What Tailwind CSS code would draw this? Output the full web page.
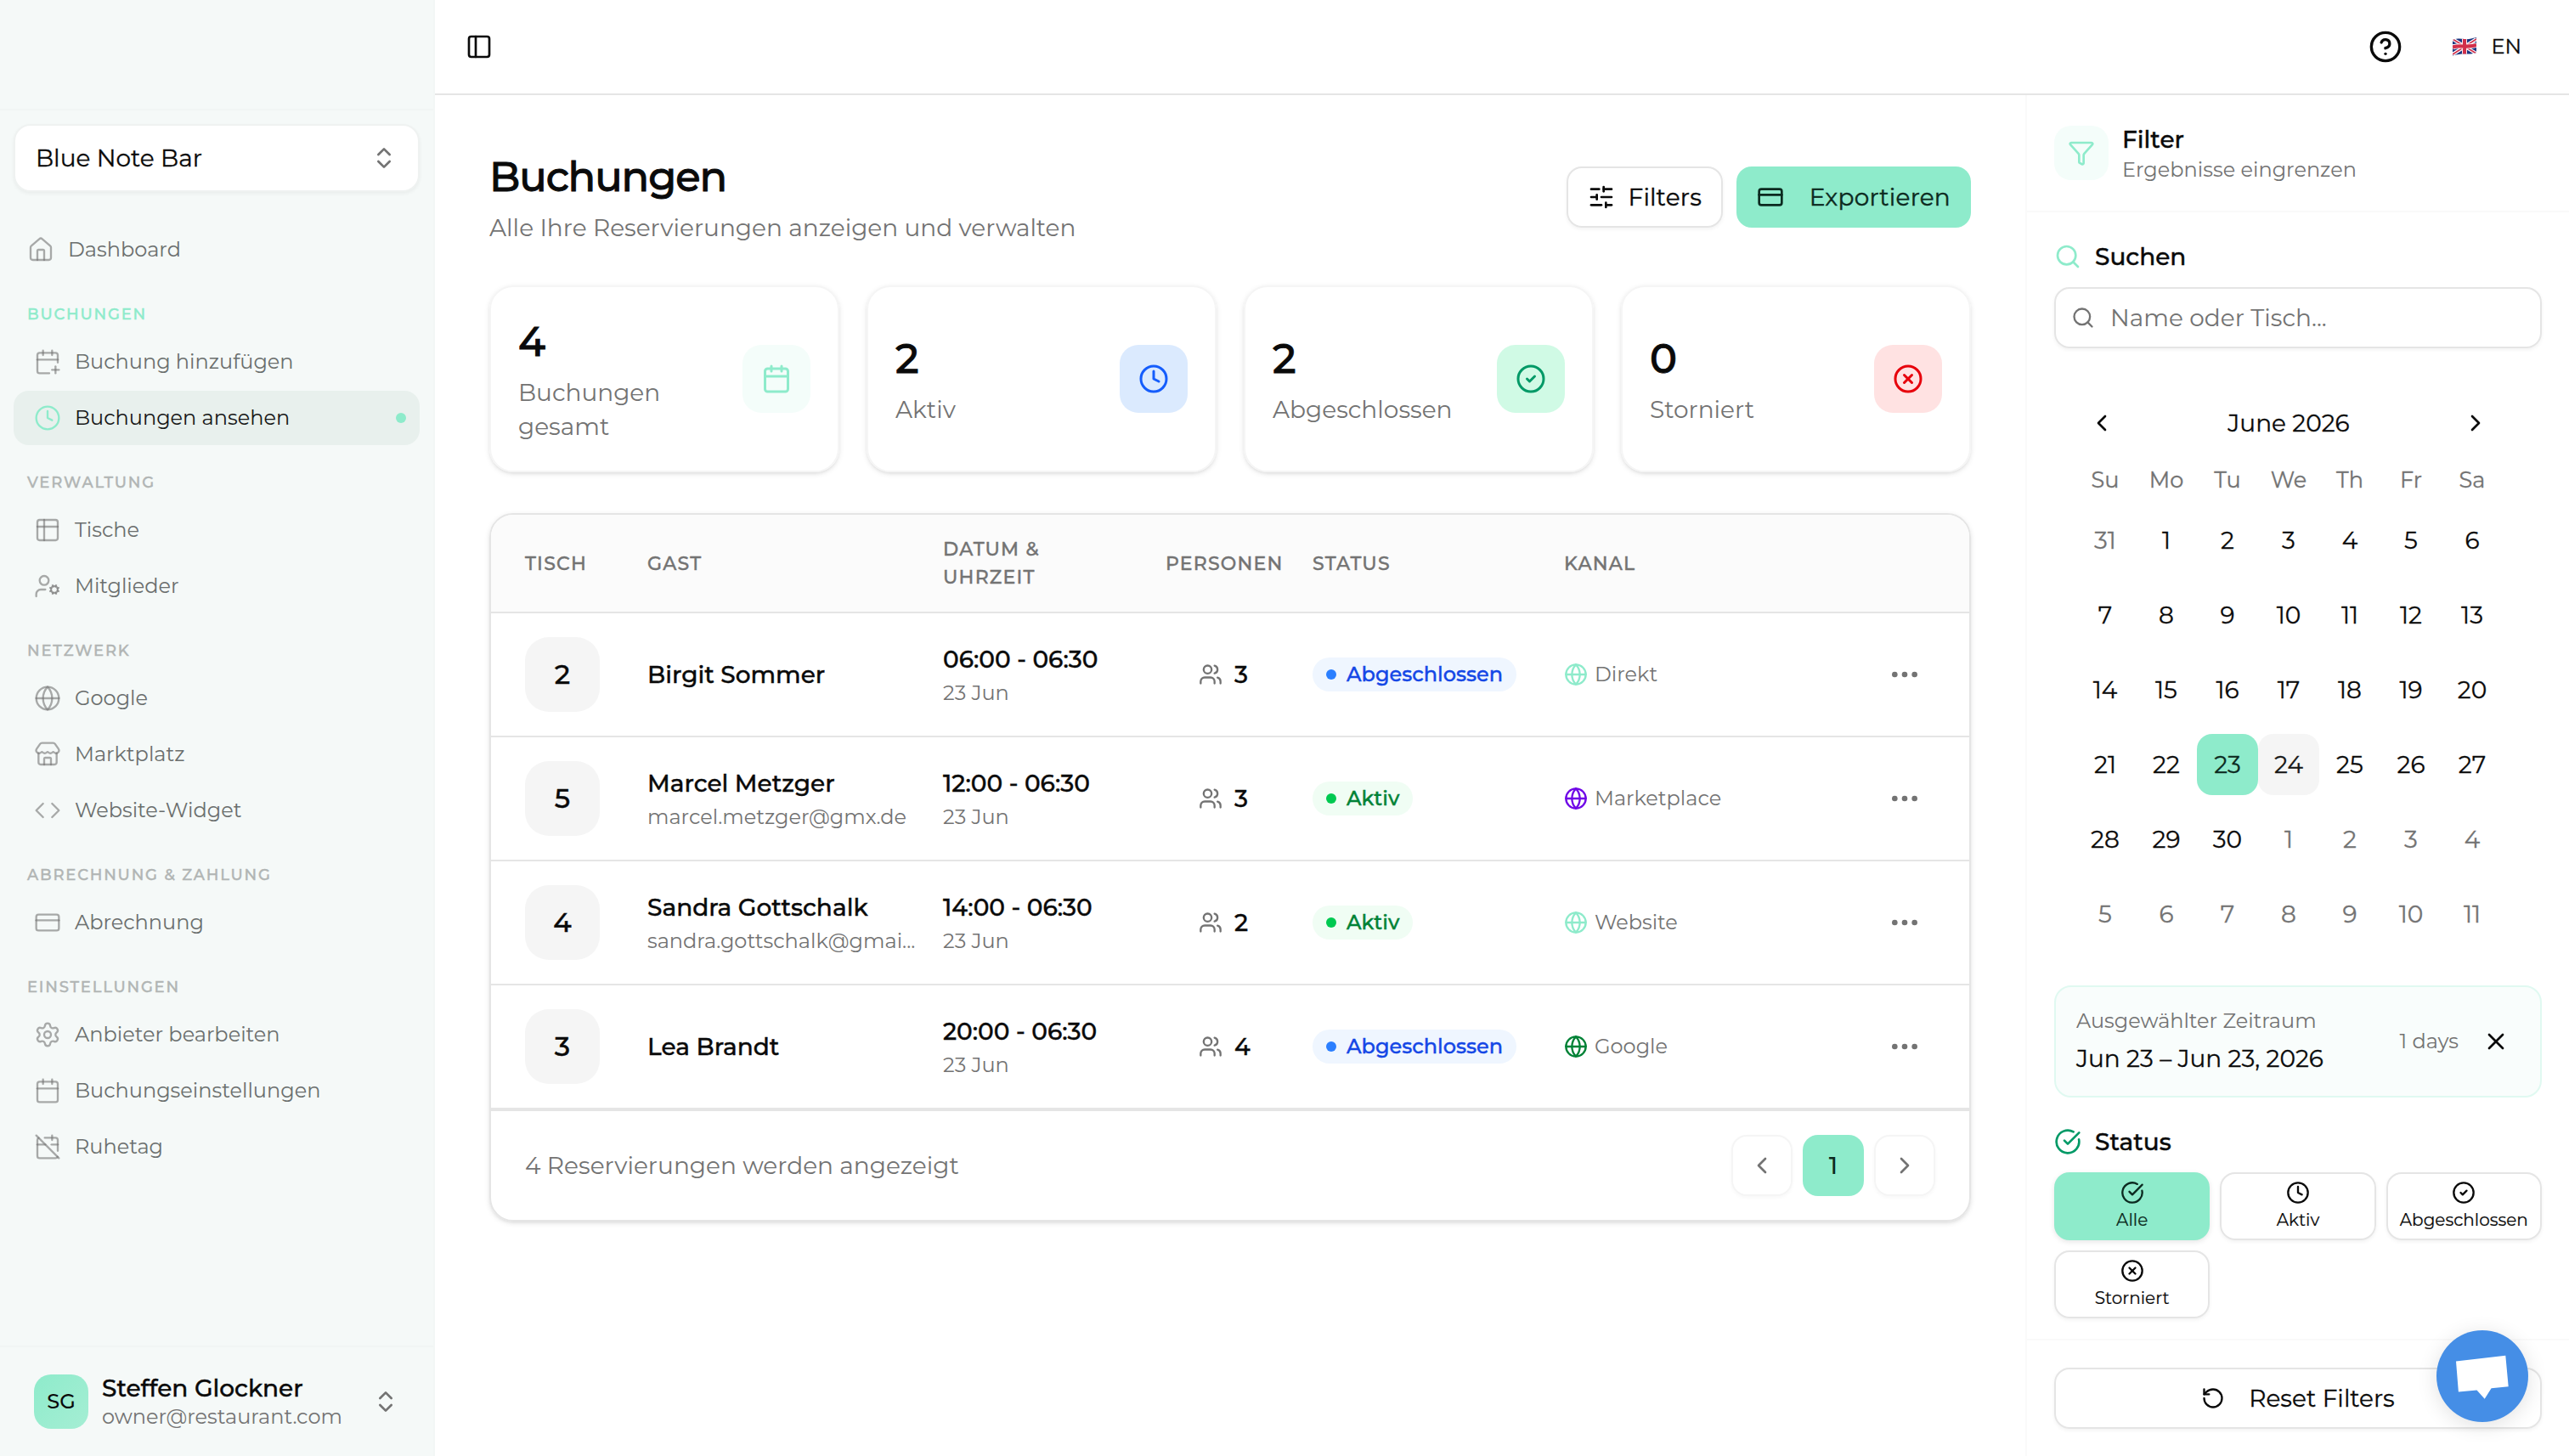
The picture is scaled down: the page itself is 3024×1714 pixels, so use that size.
<!DOCTYPE html>
<html lang="de">

<head>
	<meta charset="utf-8" />
	<meta name="viewport" content="width=device-width, initial-scale=1.0" />
	<script src="https://cdn.jsdelivr.net/npm/@tailwindcss/browser@4"></script>
	<title>Buchungen</title>
</head>

<body class="bg-white font-[Montserrat,Inter,sans-serif] text-[28px] leading-10 text-neutral-950">
	<!-- icons -->
	<svg class="hidden">
		<symbol id="panel" viewBox="0 0 24 24"><rect width="18" height="18" x="3" y="3" rx="2" /><path d="M9 3v18" /></symbol>
		<symbol id="updown" viewBox="0 0 24 24"><path d="m7 15 5 5 5-5" /><path d="m7 9 5-5 5 5" /></symbol>
		<symbol id="house" viewBox="0 0 24 24"><path d="M15 21v-8a1 1 0 0 0-1-1h-4a1 1 0 0 0-1 1v8" /><path d="M3 10a2 2 0 0 1 .709-1.528l7-5.999a2 2 0 0 1 2.582 0l7 5.999A2 2 0 0 1 21 10v9a2 2 0 0 1-2 2H5a2 2 0 0 1-2-2z" /></symbol>
		<symbol id="calendar-plus" viewBox="0 0 24 24"><path d="M16 19h6" /><path d="M16 2v4" /><path d="M19 16v6" /><path d="M21 12.598V6a2 2 0 0 0-2-2H5a2 2 0 0 0-2 2v14a2 2 0 0 0 2 2h8.5" /><path d="M3 10h18" /><path d="M8 2v4" /></symbol>
		<symbol id="clock" viewBox="0 0 24 24"><circle cx="12" cy="12" r="10" /><path d="M12 6v6l4 2" /></symbol>
		<symbol id="table" viewBox="0 0 24 24"><rect width="18" height="18" x="3" y="3" rx="2" /><path d="M3 9h18" /><path d="M9 3v18" /></symbol>
		<symbol id="user-cog" viewBox="0 0 24 24"><path d="M10 15H6a4 4 0 0 0-4 4v2" /><path d="m14.305 16.53.923-.382" /><path d="m15.228 13.852-.923-.383" /><path d="m16.852 12.228-.383-.923" /><path d="m16.852 17.772-.383.924" /><path d="m19.148 12.228.383-.923" /><path d="m19.53 18.696-.382-.924" /><path d="m20.772 13.852.924-.383" /><path d="m20.772 16.148.924.383" /><circle cx="18" cy="15" r="3" /><circle cx="9" cy="7" r="4" /></symbol>
		<symbol id="globe" viewBox="0 0 24 24"><circle cx="12" cy="12" r="10" /><path d="M12 2a14.5 14.5 0 0 0 0 20 14.5 14.5 0 0 0 0-20" /><path d="M2 12h20" /></symbol>
		<symbol id="store" viewBox="0 0 24 24"><path d="M15 21v-5a1 1 0 0 0-1-1h-4a1 1 0 0 0-1 1v5" /><path d="M17.774 10.31a1.12 1.12 0 0 0-1.549 0 2.5 2.5 0 0 1-3.451 0 1.12 1.12 0 0 0-1.548 0 2.5 2.5 0 0 1-3.452 0 1.12 1.12 0 0 0-1.549 0 2.5 2.5 0 0 1-3.77-3.248l2.889-4.184A2 2 0 0 1 7 2h10a2 2 0 0 1 1.653.873l2.895 4.192a2.5 2.5 0 0 1-3.774 3.244" /><path d="M4 10.95V19a2 2 0 0 0 2 2h12a2 2 0 0 0 2-2v-8.05" /></symbol>
		<symbol id="code" viewBox="0 0 24 24"><path d="m16 18 6-6-6-6" /><path d="m8 6-6 6 6 6" /></symbol>
		<symbol id="card" viewBox="0 0 24 24"><rect width="20" height="14" x="2" y="5" rx="2" /><path d="M2 10h20" /></symbol>
		<symbol id="settings" viewBox="0 0 24 24"><path d="M9.671 4.136a2.34 2.34 0 0 1 4.659 0 2.34 2.34 0 0 0 3.319 1.915 2.34 2.34 0 0 1 2.33 4.033 2.34 2.34 0 0 0 0 3.831 2.34 2.34 0 0 1-2.33 4.033 2.34 2.34 0 0 0-3.319 1.915 2.34 2.34 0 0 1-4.659 0 2.34 2.34 0 0 0-3.32-1.915 2.34 2.34 0 0 1-2.33-4.033 2.34 2.34 0 0 0 0-3.831A2.34 2.34 0 0 1 6.35 6.051a2.34 2.34 0 0 0 3.319-1.915" /><circle cx="12" cy="12" r="3" /></symbol>
		<symbol id="calendar" viewBox="0 0 24 24"><path d="M8 2v4" /><path d="M16 2v4" /><rect width="18" height="18" x="3" y="4" rx="2" /><path d="M3 10h18" /></symbol>
		<symbol id="calendar-off" viewBox="0 0 24 24"><path d="M4.2 4.2A2 2 0 0 0 3 6v14a2 2 0 0 0 2 2h14a2 2 0 0 0 1.82-1.18" /><path d="M21 15.5V6a2 2 0 0 0-2-2H9.5" /><path d="M16 2v4" /><path d="M3 10h7" /><path d="M21 10h-5.5" /><path d="m2 2 20 20" /></symbol>
		<symbol id="help" viewBox="0 0 24 24"><circle cx="12" cy="12" r="10" /><path d="M9.09 9a3 3 0 0 1 5.83 1c0 2-3 3-3 3" /><path d="M12 17h.01" /></symbol>
		<symbol id="sliders" viewBox="0 0 24 24"><path d="M10 5H3" /><path d="M12 19H3" /><path d="M14 3v4" /><path d="M16 17v4" /><path d="M21 12h-9" /><path d="M21 19h-5" /><path d="M21 5h-7" /><path d="M8 10v4" /><path d="M8 12H3" /></symbol>
		<symbol id="check" viewBox="0 0 24 24"><circle cx="12" cy="12" r="10" /><path d="m9 12 2 2 4-4" /></symbol>
		<symbol id="check-big" viewBox="0 0 24 24"><path d="M21.801 10A10 10 0 1 1 17 3.335" /><path d="m9 11 3 3L22 4" /></symbol>
		<symbol id="circle-x" viewBox="0 0 24 24"><circle cx="12" cy="12" r="10" /><path d="m15 9-6 6" /><path d="m9 9 6 6" /></symbol>
		<symbol id="users" viewBox="0 0 24 24"><path d="M16 21v-2a4 4 0 0 0-4-4H6a4 4 0 0 0-4 4v2" /><path d="M16 3.128a4 4 0 0 1 0 7.744" /><path d="M22 21v-2a4 4 0 0 0-3-3.87" /><circle cx="9" cy="7" r="4" /></symbol>
		<symbol id="dots" viewBox="0 0 24 24"><circle cx="12" cy="12" r="1" /><circle cx="19" cy="12" r="1" /><circle cx="5" cy="12" r="1" /></symbol>
		<symbol id="left" viewBox="0 0 24 24"><path d="m15 18-6-6 6-6" /></symbol>
		<symbol id="right" viewBox="0 0 24 24"><path d="m9 18 6-6-6-6" /></symbol>
		<symbol id="funnel" viewBox="0 0 24 24"><path d="M10 20a1 1 0 0 0 .553.895l2 1A1 1 0 0 0 14 21v-7a2 2 0 0 1 .517-1.341L21.74 4.67A1 1 0 0 0 21 3H3a1 1 0 0 0-.742 1.67l7.225 7.989A2 2 0 0 1 10 14z" /></symbol>
		<symbol id="search" viewBox="0 0 24 24"><path d="m21 21-4.34-4.34" /><circle cx="11" cy="11" r="8" /></symbol>
		<symbol id="x" viewBox="0 0 24 24"><path d="M18 6 6 18" /><path d="m6 6 12 12" /></symbol>
		<symbol id="reset" viewBox="0 0 24 24"><path d="M3 12a9 9 0 1 0 9-9 9.75 9.75 0 0 0-6.74 2.74L3 8" /><path d="M3 3v5h5" /></symbol>
	</svg>

	<div class="flex h-[1714px] w-[3024px] overflow-hidden fill-none stroke-current stroke-2 [stroke-linecap:round] [stroke-linejoin:round]">
		<!-- sidebar -->
		<aside class="flex w-[512px] shrink-0 flex-col border-r-2 border-[#f3f7f6] bg-[#f5f9f8]">
			<div class="h-[130px] shrink-0 border-b-2 border-[#f1f5f4]"></div>
			<div class="p-4">
				<button class="flex h-20 w-full items-center justify-between rounded-[20px] border-2 border-[#eff2f1] bg-white px-6 shadow-[0_2px_4px_rgb(0_0_0/0.05)] [-webkit-text-stroke:0.3px]">
					<span>Blue Note Bar</span>
					<svg class="size-8 text-neutral-500"><use href="#updown" /></svg>
				</button>
			</div>
			<nav class="grow px-4 pt-5 text-[24px] text-[#6b6f6e]">
				<a class="flex h-16 items-center gap-4 px-4"><svg class="size-8 stroke-[1.75] text-neutral-500/60"><use href="#house" /></svg>Dashboard</a>
				<div id="nav"></div>
			</nav>
			<div class="flex h-[130px] shrink-0 items-center border-t-2 border-[#f1f5f4] pr-10 pl-10">
				<div class="flex size-16 items-center justify-center rounded-[20px] bg-linear-to-br from-[#8eebcb] to-[#a5eed4] text-[24px] font-medium">SG</div>
				<div class="ml-4 grow">
					<div class="text-[28px] leading-[35px] font-medium [-webkit-text-stroke:0.4px]">Steffen Glockner</div>
					<div class="text-[24px] leading-8 text-neutral-500">owner@restaurant.com</div>
				</div>
				<svg class="size-8 text-neutral-500"><use href="#updown" /></svg>
			</div>
		</aside>

		<div class="flex grow flex-col">
			<!-- top bar -->
			<header class="flex h-28 shrink-0 items-center border-b-2 border-neutral-200 pl-9">
				<svg class="size-8"><use href="#panel" /></svg>
				<svg class="ml-auto size-10"><use href="#help" /></svg>
				<svg class="ml-[59px] h-[22px] w-7" viewBox="0 0 28 22">
					<clipPath id="flag"><path d="M0 3C6 1 9 1.500 14 2S22 1.500 28 0V18C22 20 19 19.500 14 19.500S6 20 0 21.500Z" /></clipPath>
					<g clip-path="url(#flag)" stroke-linecap="butt">
						<rect width="28" height="22" fill="#1b3580" stroke="none" />
						<path d="M0 2 28 19M0 20 28 2" stroke="#fff" stroke-width="4" />
						<path d="M0 2 28 19M0 20 28 2" stroke="#d22f4a" stroke-width="1.600" />
						<path d="M14 0V22M0 11.500C8 9 12 11 16 10.700S24 10 28 9" stroke="#fff" stroke-width="6" />
						<path d="M14 0V22M0 11.500C8 9 12 11 16 10.700S24 10 28 9" stroke="#d22f4a" stroke-width="4.200" />
					</g>
				</svg>
				<span class="mr-[56px] ml-[17px] text-[24px] [-webkit-text-stroke:0.3px]">EN</span>
			</header>

			<div class="flex grow">
				<main class="grow px-16 pt-[60px]">
					<div class="flex h-[120px] items-start justify-between">
						<div>
							<h1 class="pt-2 text-[48px] leading-[56px] font-medium tracking-[-1.1px] [-webkit-text-stroke:0.9px]">Buchungen</h1>
							<p class="pt-3 leading-10 text-neutral-500">Alle Ihre Reservierungen anzeigen und verwalten</p>
						</div>
						<div class="flex gap-4 pt-6 tracking-[0.2px] [-webkit-text-stroke:0.4px]">
							<button class="flex h-[72px] w-[184px] items-center justify-between rounded-[18px] border-2 border-neutral-200 px-[23px] shadow-[0_2px_4px_rgb(0_0_0/0.05)]"><svg class="size-8"><use href="#sliders" /></svg>Filters</button>
							<button class="flex h-[72px] w-[276px] items-center justify-between rounded-[18px] bg-[#8eebcb] px-6 text-[#0c2a20]"><svg class="size-8"><use href="#card" /></svg>Exportieren</button>
						</div>
					</div>

					<!-- stats -->
					<div class="mt-11 grid grid-cols-4 gap-8 text-neutral-500">
						<div class="flex h-[220px] items-center justify-between rounded-[28px] border-2 border-neutral-100 px-8 shadow-[0_2px_6px_rgb(0_0_0/0.1),0_2px_4px_-2px_rgb(0_0_0/0.1)]">
							<div class="w-[200px]"><div class="mb-2 text-[48px] leading-16 font-medium text-neutral-950 [-webkit-text-stroke:0.9px]">4</div>Buchungen gesamt</div>
							<div class="flex size-20 items-center justify-center rounded-[22px] bg-[#f4fdfa] text-[#8eebcb]"><svg class="size-9"><use href="#calendar" /></svg></div>
						</div>
						<div class="flex h-[220px] items-center justify-between rounded-[28px] border-2 border-neutral-100 px-8 shadow-[0_2px_6px_rgb(0_0_0/0.1),0_2px_4px_-2px_rgb(0_0_0/0.1)]">
							<div><div class="mb-2 text-[48px] leading-16 font-medium text-neutral-950 [-webkit-text-stroke:0.9px]">2</div>Aktiv</div>
							<div class="flex size-20 items-center justify-center rounded-[22px] bg-blue-100 text-blue-600"><svg class="size-9"><use href="#clock" /></svg></div>
						</div>
						<div class="flex h-[220px] items-center justify-between rounded-[28px] border-2 border-neutral-100 px-8 shadow-[0_2px_6px_rgb(0_0_0/0.1),0_2px_4px_-2px_rgb(0_0_0/0.1)]">
							<div><div class="mb-2 text-[48px] leading-16 font-medium text-neutral-950 [-webkit-text-stroke:0.9px]">2</div>Abgeschlossen</div>
							<div class="flex size-20 items-center justify-center rounded-[22px] bg-emerald-100 text-emerald-600"><svg class="size-9"><use href="#check" /></svg></div>
						</div>
						<div class="flex h-[220px] items-center justify-between rounded-[28px] border-2 border-neutral-100 px-8 shadow-[0_2px_6px_rgb(0_0_0/0.1),0_2px_4px_-2px_rgb(0_0_0/0.1)]">
							<div><div class="mb-2 text-[48px] leading-16 font-medium text-neutral-950 [-webkit-text-stroke:0.9px]">0</div>Storniert</div>
							<div class="flex size-20 items-center justify-center rounded-[22px] bg-red-100 text-red-600"><svg class="size-9"><use href="#circle-x" /></svg></div>
						</div>
					</div>

					<!-- bookings -->
					<section class="mt-12 overflow-hidden rounded-[28px] border-2 border-neutral-200 shadow-[0_2px_6px_rgb(0_0_0/0.1),0_2px_4px_-2px_rgb(0_0_0/0.1)]">
						<div class="grid h-[116px] grid-cols-[144px_348px_262px_173px_296px_1fr] items-center border-b-2 border-neutral-200 bg-[#fbfbfb] px-10 text-[22px] leading-[33px] font-medium tracking-[1.2px] text-neutral-500 [-webkit-text-stroke:0.4px]">
							<span>TISCH</span><span>GAST</span><span>DATUM &amp;<br>UHRZEIT</span><span>PERSONEN</span><span>STATUS</span><span>KANAL</span>
						</div>
						<div id="rows"></div>
						<div class="flex h-[130px] items-center justify-between border-t-2 border-neutral-200 px-10 text-neutral-500">
							<span>4 Reservierungen werden angezeigt</span>
							<div class="flex gap-3">
								<button class="flex size-[72px] items-center justify-center rounded-[18px] border-2 border-neutral-100 shadow-[0_2px_4px_rgb(0_0_0/0.03)]"><svg class="size-8"><use href="#left" /></svg></button>
								<button class="flex size-[72px] items-center justify-center rounded-[18px] bg-[#8eebcb] font-medium text-[#0c2a20]">1</button>
								<button class="flex size-[72px] items-center justify-center rounded-[18px] border-2 border-neutral-100 shadow-[0_2px_4px_rgb(0_0_0/0.03)]"><svg class="size-8"><use href="#right" /></svg></button>
							</div>
						</div>
					</section>
				</main>

				<!-- filter panel -->
				<aside class="flex w-[640px] shrink-0 flex-col border-l-2 border-neutral-50">
					<div class="flex h-[138px] items-center gap-4 border-b-2 border-neutral-50 px-8">
						<div class="flex size-16 items-center justify-center rounded-[20px] bg-[#f4fdfa] text-[#8eebcb]"><svg class="size-8"><use href="#funnel" /></svg></div>
						<div class="mt-1">
							<div class="leading-9 font-medium [-webkit-text-stroke:0.4px]">Filter</div>
							<div class="text-[24px] leading-9 text-neutral-500">Ergebnisse eingrenzen</div>
						</div>
					</div>

					<div class="grow px-8 pt-8">
						<div class="flex items-center gap-4 font-medium [-webkit-text-stroke:0.4px]"><svg class="size-8 text-[#8eebcb]"><use href="#search" /></svg>Suchen</div>
						<div class="mt-4 flex h-[72px] items-center gap-[18px] rounded-[18px] border-2 border-neutral-200 px-[18px] text-neutral-500 shadow-[0_2px_4px_rgb(0_0_0/0.05)]"><svg class="size-7"><use href="#search" /></svg>Name oder Tisch...</div>

						<div class="mt-[52px] ml-6 w-[504px] [-webkit-text-stroke:0.3px]">
							<div class="flex h-[72px] items-center justify-between px-4">
								<svg class="size-8"><use href="#left" /></svg>
								<span>June 2026</span>
								<svg class="size-8"><use href="#right" /></svg>
							</div>
							<div id="cal" class="mt-[11px] grid grid-cols-7 gap-y-4 text-center"></div>
						</div>

						<div class="mt-12 flex h-[132px] items-center rounded-[20px] border-2 border-[#e0f9f1] bg-[#f9fdfc] pr-9 pl-6">
							<div class="grow">
								<div class="text-[24px] leading-8 text-neutral-500">Ausgewählter Zeitraum</div>
								<div class="mt-2 leading-10 [-webkit-text-stroke:0.3px]">Jun 23 – Jun 23, 2026</div>
							</div>
							<span class="mr-7 text-[24px] text-neutral-500">1 days</span>
							<svg class="size-8"><use href="#x" /></svg>
						</div>

						<div class="mt-8 flex items-center gap-4 font-medium [-webkit-text-stroke:0.4px]"><svg class="size-8 text-emerald-600"><use href="#check-big" /></svg>Status</div>
						<div class="mt-4 grid grid-cols-3 gap-3 text-[20px] leading-6 [-webkit-text-stroke:0.2px]">
							<button class="flex h-20 flex-col items-center gap-1.5 rounded-[18px] bg-[#8eebcb] pt-[10px] text-[#0c2a20] shadow-[0_2px_6px_rgb(0_0_0/0.1)]"><svg class="size-7"><use href="#check-big" /></svg>Alle</button>
							<button class="flex h-20 flex-col items-center gap-1.5 rounded-[18px] border-2 border-neutral-200 pt-2 shadow-[0_2px_4px_rgb(0_0_0/0.05)]"><svg class="size-7"><use href="#clock" /></svg>Aktiv</button>
							<button class="flex h-20 flex-col items-center gap-1.5 rounded-[18px] border-2 border-neutral-200 pt-2 shadow-[0_2px_4px_rgb(0_0_0/0.05)]"><svg class="size-7"><use href="#check" /></svg>Abgeschlossen</button>
							<button class="flex h-20 flex-col items-center gap-1.5 rounded-[18px] border-2 border-neutral-200 pt-2 shadow-[0_2px_4px_rgb(0_0_0/0.05)]"><svg class="size-7"><use href="#circle-x" /></svg>Storniert</button>
						</div>
					</div>

					<div class="relative h-[138px] border-t-2 border-neutral-50 px-8 pt-8">
						<button class="flex h-[72px] w-full items-center justify-center rounded-[18px] border-2 border-neutral-200 shadow-[0_2px_4px_rgb(0_0_0/0.05)] [-webkit-text-stroke:0.3px]"><svg class="mr-7 size-7"><use href="#reset" /></svg>Reset Filters</button>
						<!-- chat bubble -->
						<div class="absolute -top-3 right-12 size-[108px] rounded-full bg-[#458ee6] shadow-[0_4px_24px_rgb(0_0_0/0.12)]">
							<svg class="size-full stroke-none" viewBox="0 0 108 108"><path fill="#fff" d="M23 36.500 81.300 29.800 84.700 66.300 64.600 68.200 56.700 80.800 47.500 70.400 25.900 72.600Z" /></svg>
						</div>
					</div>
				</aside>
			</div>
		</div>
	</div>

	<script>
		// sidebar groups
		const groups = [
			['BUCHUNGEN', [['calendar-plus', 'Buchung hinzufügen'], ['clock', 'Buchungen ansehen', true]]],
			['VERWALTUNG', [['table', 'Tische'], ['user-cog', 'Mitglieder']]],
			['NETZWERK', [['globe', 'Google'], ['store', 'Marktplatz'], ['code', 'Website-Widget']]],
			['ABRECHNUNG &amp; ZAHLUNG', [['card', 'Abrechnung']]],
			['EINSTELLUNGEN', [['settings', 'Anbieter bearbeiten'], ['calendar', 'Buchungseinstellungen'], ['calendar-off', 'Ruhetag']]],
		];
		document.getElementById('nav').innerHTML = groups.map(([title, items], i) => `
			<div class="h-[68px] px-4 pt-8 text-[18px] leading-6 font-medium tracking-[1.8px] [-webkit-text-stroke:0.4px] ${i ? 'text-[#b1b5b4]' : 'text-[#8eebcb]'}">${title}</div>
			<div class="flex flex-col gap-0.5">${items.map(([icon, text, active]) => `
				<a class="flex h-16 items-center gap-4 rounded-[18px] px-6 ${active ? 'bg-[#e8f0ed] text-neutral-900' : ''}">
					<svg class="size-8 stroke-[1.75] ${active ? 'text-[#8eebcb]' : 'text-neutral-500/60'}"><use href="#${icon}" /></svg>
					<span class="grow">${text}</span>
					${active ? '<i class="-mr-2 size-3 rounded-full bg-[#8eebcb]"></i>' : ''}
				</a>`).join('')}</div>`).join('');

		// bookings
		const rows = [
			[2, 'Birgit Sommer', '', '06:00 - 06:30', 3, false, 'Direkt', 'text-[#8eebcb]'],
			[5, 'Marcel Metzger', 'marcel.metzger@gmx.de', '12:00 - 06:30', 3, true, 'Marketplace', 'text-violet-700'],
			[4, 'Sandra Gottschalk', 'sandra.gottschalk@gmai...', '14:00 - 06:30', 2, true, 'Website', 'text-[#8eebcb]'],
			[3, 'Lea Brandt', '', '20:00 - 06:30', 4, false, 'Google', 'text-green-700'],
		];
		document.getElementById('rows').innerHTML = rows.map(([table, guest, mail, time, persons, active, channel, color]) => `
			<div class="grid h-[146px] grid-cols-[144px_348px_262px_173px_296px_1fr] items-center border-b-2 border-neutral-200 px-10">
				<div class="flex size-[88px] items-center justify-center rounded-[28px] bg-neutral-100 text-[32px] font-medium [-webkit-text-stroke:0.4px]">${table}</div>
				<div>
					<div class="font-medium [-webkit-text-stroke:0.4px]">${guest}</div>
					${mail ? `<div class="mt-0.5 -mb-0.5 text-[24px] leading-9 whitespace-nowrap text-neutral-500">${mail}</div>` : ''}
				</div>
				<div>
					<div class="font-medium [-webkit-text-stroke:0.4px]">${time}</div>
					<div class="mt-0.5 -mb-0.5 text-[24px] leading-9 text-neutral-500">23 Jun</div>
				</div>
				<div class="flex items-center gap-3.5 pl-[39px] font-medium [-webkit-text-stroke:0.4px]"><svg class="size-7 text-neutral-500"><use href="#users" /></svg>${persons}</div>
				<div class="flex"><span class="flex h-10 items-center gap-3 rounded-full px-4 text-[24px] font-medium [-webkit-text-stroke:0.4px] ${active ? 'bg-green-50 text-green-700' : 'bg-blue-50 text-blue-700'}"><i class="size-3 rounded-full ${active ? 'bg-green-500' : 'bg-blue-500'}"></i>${active ? 'Aktiv' : 'Abgeschlossen'}</span></div>
				<div class="flex items-center text-[24px] text-neutral-500"><svg class="mr-2 size-7 ${color}"><use href="#globe" /></svg>${channel}<svg class="mr-4 ml-auto size-10"><use href="#dots" /></svg></div>
			</div>`).join('');

		// calendar, six weeks from May 31
		let cells = ['Su', 'Mo', 'Tu', 'We', 'Th', 'Fr', 'Sa'].map(d => `<span class="-mb-px text-[25.6px] leading-10 text-neutral-500">${d}</span>`).join('');
		for (let i = 0; i < 42; i++) {
			const day = i === 0 ? 31 : i > 30 ? i - 30 : i;
			let style = i === 0 || i > 30 ? 'text-neutral-500' : '';
			if (i === 23) style = 'bg-[#8eebcb] text-[#0c2a20]';
			if (i === 24) style = 'bg-neutral-100 text-neutral-900';
			cells += `<span class="h-[72px] rounded-[18px] leading-[72px] ${style}">${day}</span>`;
		}
		document.getElementById('cal').innerHTML = cells;
	</script>
</body>

</html>
